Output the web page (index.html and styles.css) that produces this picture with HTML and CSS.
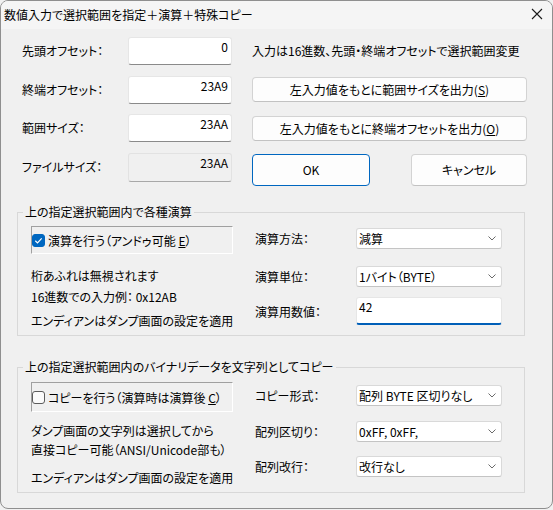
FILE: index.html
```html
<!DOCTYPE html>
<html lang="ja">
<head>
<meta charset="utf-8">
<link rel="stylesheet" href="styles.css">
</head>
<body>
<div class="window">
  <div class="titlebar">
    <span class="title">数値入力で選択範囲を指定＋演算＋特殊コピー</span>
    <svg class="close" width="12" height="12" viewBox="0 0 12 12"><path d="M1 1 L11 11 M11 1 L1 11" stroke="#1a1a1a" stroke-width="1.1" fill="none"/></svg>
  </div>
  <div class="content">
    <div class="row r1">
      <span class="lbl">先頭オフセット：</span>
      <div class="field">0</div>
      <span class="hint">入力は16進数、先頭・終端オフセットで選択範囲変更</span>
    </div>
    <div class="row r2">
      <span class="lbl">終端オフセット：</span>
      <div class="field">23A9</div>
      <div class="btn wide">左入力値をもとに範囲サイズを出力(<u>S</u>)</div>
    </div>
    <div class="row r3">
      <span class="lbl">範囲サイズ：</span>
      <div class="field">23AA</div>
      <div class="btn wide">左入力値をもとに終端オフセットを出力(<u>O</u>)</div>
    </div>
    <div class="row r4">
      <span class="lbl">ファイルサイズ：</span>
      <div class="field disabled">23AA</div>
      <div class="btns">
        <div class="btn ok">OK</div>
        <div class="btn cancel">キャンセル</div>
      </div>
    </div>

    <fieldset class="group g1">
      <legend>上の指定選択範囲内で各種演算</legend>
      <div class="cols">
        <div class="left">
          <div class="chkframe">
            <span class="chk checked"><svg width="13" height="13" viewBox="0 0 13 13"><path d="M3.3 6.8 L5.5 8.9 L9.7 4.4" stroke="#fff" stroke-width="1.2" fill="none"/></svg></span>
            <span>演算を行う（アンドゥ可能 <u>E</u>）</span>
          </div>
          <div class="note n1">桁あふれは無視されます</div>
          <div class="note n2">16進数での入力例： 0x12AB</div>
          <div class="note n3">エンディアンはダンプ画面の設定を適用</div>
        </div>
        <div class="right">
          <div class="frow f1"><span class="flbl">演算方法：</span><div class="select"><span>減算</span><svg class="chev" width="8" height="5" viewBox="0 0 8 5"><path d="M0.5 0.5 L4 4 L7.5 0.5" stroke="#6b6b6b" stroke-width="1" fill="none"/></svg></div></div>
          <div class="frow f2"><span class="flbl">演算単位：</span><div class="select"><span>1バイト（BYTE）</span><svg class="chev" width="8" height="5" viewBox="0 0 8 5"><path d="M0.5 0.5 L4 4 L7.5 0.5" stroke="#6b6b6b" stroke-width="1" fill="none"/></svg></div></div>
          <div class="frow f3"><span class="flbl">演算用数値：</span><div class="edit">42</div></div>
        </div>
      </div>
    </fieldset>

    <fieldset class="group g2">
      <legend>上の指定選択範囲内のバイナリデータを文字列としてコピー</legend>
      <div class="cols">
        <div class="left">
          <div class="chkframe tall">
            <span class="chk"></span>
            <span>コピーを行う（演算時は演算後 <u>C</u>）</span>
          </div>
          <div class="note m1">ダンプ画面の文字列は選択してから</div>
          <div class="note m2">直接コピー可能（ANSI/Unicode部も）</div>
          <div class="note m3">エンディアンはダンプ画面の設定を適用</div>
        </div>
        <div class="right">
          <div class="frow h1"><span class="flbl">コピー形式：</span><div class="select"><span>配列 BYTE 区切りなし</span><svg class="chev" width="8" height="5" viewBox="0 0 8 5"><path d="M0.5 0.5 L4 4 L7.5 0.5" stroke="#6b6b6b" stroke-width="1" fill="none"/></svg></div></div>
          <div class="frow h2"><span class="flbl">配列区切り：</span><div class="select"><span>0xFF, 0xFF,</span><svg class="chev" width="8" height="5" viewBox="0 0 8 5"><path d="M0.5 0.5 L4 4 L7.5 0.5" stroke="#6b6b6b" stroke-width="1" fill="none"/></svg></div></div>
          <div class="frow h3"><span class="flbl">配列改行：</span><div class="select"><span>改行なし</span><svg class="chev" width="8" height="5" viewBox="0 0 8 5"><path d="M0.5 0.5 L4 4 L7.5 0.5" stroke="#6b6b6b" stroke-width="1" fill="none"/></svg></div></div>
        </div>
      </div>
    </fieldset>
  </div>
</div>
</body>
</html>
```

FILE: styles.css
```css
* { box-sizing: border-box; }
html, body { margin: 0; padding: 0; background: #f0f0f0; }
body {
  width: 553px;
  height: 510px;
  font-family: "Noto Sans CJK JP", "Noto Sans", sans-serif;
  font-feature-settings: "palt";
  font-size: 12px;
  color: #000;
}
.window {
  width: 553px;
  height: 509px;
  border: 1px solid #8f8f8f;
  border-radius: 8px;
  background: #f0f0f0;
  overflow: hidden;
}
.titlebar {
  height: 28px;
  background: #f5f5f5;
  display: flex;
  align-items: center;
  justify-content: space-between;
  padding: 0 9px 0 3px;
}
.title { font-size: 12px; line-height: 16px; }
.close { margin-top: -2px; }
.content { padding: 8px 0 0 16px; }

.row { display: flex; align-items: flex-start; margin-left: 5px; }
.lbl { width: 106px; line-height: 28px; }
.field {
  width: 104px;
  height: 28px;
  margin-right: 20px;
  background: #fff;
  border: 1px solid #e6e6e6;
  border-bottom-color: #8a8a8a;
  border-radius: 3px;
  text-align: right;
  padding: 1px 3px 0 0;
  line-height: 16px;
}
.field.disabled { background: #f0f0f0; border-color: #e2e2e2; border-bottom-color: #a8a8a8; }
.hint { line-height: 28px; }
.r2 { margin-top: 11px; }
.r3 { margin-top: 10px; }
.r4 { margin-top: 11px; }
.r4 .field { height: 29px; }
.btn {
  background: #fdfdfd;
  border: 1px solid #d3d3d3;
  border-bottom-color: #c2c2c2;
  border-radius: 4px;
  text-align: center;
}
.btn.wide { width: 275px; height: 25px; line-height: 23px; margin-top: 1px; }
.r3 .btn.wide { margin-top: 2px; }
.btns { display: flex; gap: 41px; margin-top: 1px; }
.btn.ok { width: 118px; height: 32px; line-height: 30px; border-color: #0067c0; }
.btn.cancel { width: 116px; height: 32px; line-height: 30px; }

.group {
  margin: 18px 0 0 0;
  width: 508px;
  border: 1px solid #d8d8d8;
  border-radius: 0;
  padding: 0 0 4px 13px;
  min-width: 0;
}
.group legend {
  padding: 0 2px;
  margin-left: -8px;
  line-height: 16px;
  font-size: 12px;
}
.g2 { margin-top: 23px; padding-bottom: 5px; }
.cols { display: flex; gap: 22px; }
.left { width: 202px; }
.chkframe {
  margin-top: 6px;
  height: 28px;
  border: 1px solid #a0a0a0;
  border-right-color: #fff;
  border-bottom-color: #fff;
  display: flex;
  align-items: center;
  gap: 3px;
  padding-left: 0;
  white-space: nowrap;
}
.chkframe.tall { margin-top: 7px; height: 30px; }
.chk {
  width: 13px;
  height: 13px;
  border: 1px solid #5c5c5c;
  border-radius: 3px;
  background: #fbfbfb;
  display: inline-block;
  flex: none;
}
.chk.checked { background: #0067c0; border-color: #0067c0; position: relative; }
.chk.checked svg { display: block; margin: -1px 0 0 -1px; }
.note { line-height: 20px; white-space: nowrap; }
.n1 { margin-top: 12px; }
.n2 { margin-top: 1px; }
.n3 { margin-top: 4px; }
.m1 { margin-top: 9px; line-height: 19px; }
.m2 { margin-top: 0; line-height: 19px; }
.m3 { margin-top: 9px; line-height: 19px; }

.right { width: 247px; }
.frow { display: flex; align-items: center; }
.flbl { width: 101px; }
.select {
  width: 146px;
  height: 21px;
  background: #fff;
  border: 1px solid #d9d9d9;
  border-bottom-color: #c4c4c4;
  border-radius: 3px;
  display: flex;
  align-items: center;
  justify-content: space-between;
  padding: 0 5px 0 2px;
  white-space: nowrap;
}
.chev { flex: none; }
.edit {
  width: 146px;
  height: 28px;
  background: #fff;
  border: 1px solid #e6e6e6;
  border-bottom: 2px solid #005fb8;
  border-radius: 3px;
  padding: 1px 0 0 2px;
  line-height: 16px;
}
.f1 { margin-top: 8px; }
.f2 { margin-top: 17px; }
.f3 { margin-top: 10px; }
.h1 { margin-top: 10px; }
.h2 { margin-top: 15px; }
.h3 { margin-top: 14px; }
```
